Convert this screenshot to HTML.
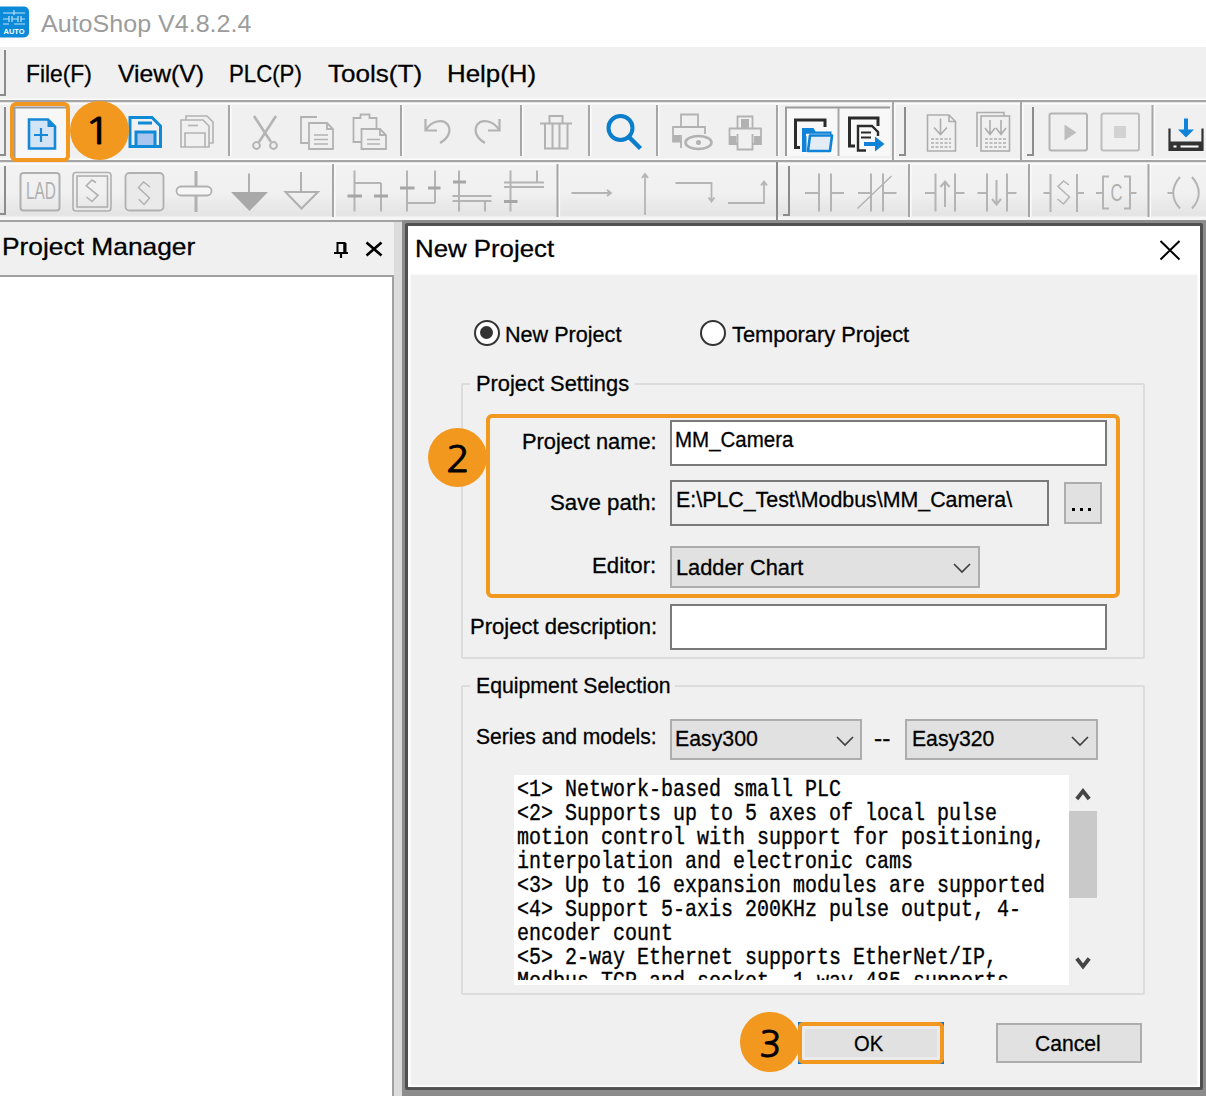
<!DOCTYPE html>
<html><head><meta charset="utf-8"><title>AutoShop V4.8.2.4</title>
<style>
*{box-sizing:border-box;margin:0;padding:0}
html,body{width:1206px;height:1096px;overflow:hidden;background:#f0f0f0}
body{position:relative;font-family:"Liberation Sans",sans-serif;color:#000}
.a{position:absolute}
.t{position:absolute;white-space:nowrap;line-height:1;transform-origin:0 0;-webkit-text-stroke:0.3px currentColor}
#titlebar{left:0;top:0;width:1206px;height:47px;background:#fff}
#menubar{left:0;top:47px;width:1206px;height:53px;background:#f0f0f0}
#tb1{left:0;top:100px;width:1206px;height:60px;background:#f0f0f0}
#tb2{left:0;top:160px;width:1206px;height:62px;background:linear-gradient(#f3f3f3,#f0f0f0 55%,#e4e4e4 92%,#f6f6f6 96%);border-bottom:2.2px solid #a2a2a2}
.hline{position:absolute;left:0;width:1206px;height:7px;background:linear-gradient(to bottom,rgba(253,253,253,0) 0,#fcfcfc 1.2px,#fcfcfc 1.7px,#a4a4a4 2.1px,#a4a4a4 4.2px,#fcfcfc 4.6px,#fcfcfc 6px,rgba(253,253,253,0) 7px)}
#pm-head{left:0;top:222px;width:393px;height:54px;background:#f0f0f0}
#pm-body{left:-2px;top:275px;width:396px;height:830px;background:#fff;border:2px solid #a0a0a0}
#gap{left:394px;top:222px;width:12px;height:880px;background:#dcdcdc}
#dlgshadow{left:402px;top:220px;width:810px;height:880px;background:#8c8c8c}
#dlg{left:405px;top:223px;width:798px;height:867px;background:#fff;border:3px solid #505050;border-radius:2px}
#dlgbody{left:411px;top:275px;width:786px;height:810px;background:#f0f0f0;box-shadow:0 0 2px 1px #f7f7f7}
.grp{position:absolute;border:2px solid #dcdcdc;border-radius:2px}
.inp{position:absolute;border:2px solid #7a7a7a;background:#fff}
.sel{position:absolute;border:2px solid #adadad;background:#e1e1e1}
.btn{position:absolute;border:2px solid #adadad;background:#e1e1e1}
.radio{position:absolute;width:26px;height:26px;border:2px solid #333;border-radius:50%;background:#fff}
.radio.on::after{content:"";position:absolute;left:4.25px;top:4.25px;width:13.5px;height:13.5px;border-radius:50%;background:#333}
.mark{position:absolute;border-radius:50%;background:#f2981f}
.obox{position:absolute;border:4px solid #f2981f;border-radius:6px}
.num{position:absolute;white-space:nowrap;line-height:1;font-size:36px;color:#000;transform-origin:0 0;font-family:"NanumGothic","Liberation Sans",sans-serif;-webkit-text-stroke:0.8px #000}
.mono{position:absolute;font-family:"Liberation Mono",monospace;font-size:24px;line-height:24px;white-space:pre;color:#000;transform:scaleX(0.8333);transform-origin:0 0;-webkit-text-stroke:0.35px #000}
svg{position:absolute;overflow:visible}
</style></head><body>
<div class="a" id="titlebar"></div>
<div class="a" id="menubar"></div>
<div class="a" id="tb1"></div>
<div class="a" id="tb2"></div>
<div class="hline" style="top:97.5px"></div>
<div class="hline" style="top:157.6px"></div>
<div class="a" id="pm-head"></div>
<div class="a" id="pm-body"></div>
<div class="a" id="gap"></div>
<div class="a" id="dlgshadow"></div>
<div class="a" id="dlg"></div>
<div class="a" id="dlgbody"></div>
<!-- toolbar decorations -->
<svg style="left:0;top:0" width="1206" height="224" viewBox="0 0 1206 224" fill="none" stroke-linecap="butt">
<!-- app icon -->
<rect x="-4" y="6.5" width="33" height="31" rx="5" fill="#0b8ad9" stroke="none"/>
<g stroke="#bfe3f8" stroke-width="1.2"><path d="M3 13H25M3 19H9M12 19H18M21 19H25M3 24H9M14 24H25M9 16V22M12 16V22M18 16V22M21 16V22M14 10V15"/></g>
<text x="3.5" y="34" font-family="Liberation Sans, sans-serif" font-weight="bold" font-size="7.5" fill="#fff" stroke="none" textLength="21" lengthAdjust="spacingAndGlyphs">AUTO</text>
<!-- grippers -->
<g stroke="#8c8c8c" stroke-width="2">
<path d="M5 50V95H0"/>
<path d="M5 107V155H0"/>
<path d="M5 166V214H0"/>
<path d="M905 107V155H899"/>
<path d="M1033 107V155H1027"/>
<path d="M789 166V215H783"/>
</g>
<!-- separators -->
<g stroke="#fbfbfb" stroke-width="1.600">
<path d="M230.800 105V156M402.800 105V156M522.800 105V156M590.800 105V156M658.800 105V156M778.800 105V156M1154.300 105V156"/>
<path d="M894.800 103V159M1022.800 103V159"/>
<path d="M334.800 164V217M559.300 164V217M910.800 164V217M1030.800 164V217M1150.300 164V217"/>
</g>
<g stroke="#a6a6a6" stroke-width="2">
<path d="M229 105V156M401 105V156M521 105V156M589 105V156M657 105V156M777 105V156M1152.500 105V156"/>
<path d="M893 101V161M1021 101V161"/>
<path d="M333 164V217M557.500 164V217M909 164V217M1029 164V217M1148.500 164V217"/>
</g>
<path d="M777 162V222" stroke="#8a8a8a" stroke-width="2"/>
<!-- pressed new button -->
<rect x="14" y="105" width="52" height="53" fill="#f7f7f7" stroke="none"/>
<path d="M14.500 158V107.500H66" stroke="#9a9a9a" stroke-width="2"/>
<!-- new doc -->
<path d="M29 119.500H48L55 126.500V148.500H29Z" fill="#d3e5f5" stroke="#1788d6" stroke-width="2.600"/>
<path d="M47.500 119.500L55 127H47.500Z" fill="#1788d6" stroke="none"/>
<path d="M34 135H48M41 128V142" stroke="#1788d6" stroke-width="2.200"/>
<!-- save -->
<path d="M130 117.500H152L160.500 126V146.500H130Z" stroke="#0f8ad6" stroke-width="3"/>
<path d="M138 123H152" stroke="#0f8ad6" stroke-width="3"/>
<rect x="136" y="132" width="19" height="14.500" fill="#a9c6ee" stroke="#0f8ad6" stroke-width="3"/>
<!-- save all -->
<g stroke="#b2b2b2" stroke-width="1.600">
<path d="M181 120H203L209 126V147H181Z"/>
<path d="M186 120V116H207L213 122V143H209"/>
<path d="M188 125.500H198"/>
<path d="M185 147V133H205V147"/>
</g>
<!-- scissors -->
<g stroke="#b4b4b4" stroke-width="2.600">
<path d="M254 116L271 142M276 116L259 142"/>
<circle cx="256.500" cy="145.500" r="3.400" stroke-width="2"/>
<circle cx="273.500" cy="145.500" r="3.400" stroke-width="2"/>
</g>
<!-- copy -->
<g stroke="#b2b2b2" stroke-width="1.800">
<path d="M317 117H301V143H308"/>
<path d="M309 123H327L333 129V149H309Z"/>
<path d="M327 123V129H333"/>
<path d="M314 135H328M314 139.500H328M314 144H328" stroke-width="1.500"/>
</g>
<!-- paste -->
<g stroke="#b2b2b2" stroke-width="1.800">
<path d="M361 142H353.500V118H360.500V114.500H369.500V118H376.500V128"/>
<path d="M361.500 129H380L386 135V149H361.500Z"/>
<path d="M380 129V135H386"/>
<path d="M367 139.500H380M367 144H380" stroke-width="1.500"/>
</g>
<!-- undo -->
<g stroke="#b2b2b2" stroke-width="2.200">
<path d="M425.500 119V130.500H437"/>
<path d="M426 130C431 121 443 118 448 125C452 132 447 139 440 143"/>
<path d="M499.500 119V130.500H488"/>
<path d="M499 130C494 121 482 118 477 125C473 132 478 139 485 143"/>
</g>
<!-- trash -->
<g stroke="#b2b2b2" stroke-width="2">
<path d="M540 123.500H572M549.500 123V116H562.500V123"/>
<path d="M545 124V148.500H567.500V124M552.500 124V148M559.500 124V148"/>
</g>
<!-- search -->
<circle cx="620.500" cy="128" r="12" stroke="#0a7dcb" stroke-width="4"/>
<path d="M629.500 137.500L640.500 148.500" stroke="#0a7dcb" stroke-width="4.500"/>
<!-- print preview -->
<g stroke="#b2b2b2" stroke-width="1.800">
<path d="M681 127V114.500H698V127"/>
<path d="M682 141.500H673V127H705V134"/>
<rect x="673" y="135" width="7" height="6.500" fill="#b2b2b2" stroke="none"/>
<path d="M681 135V148"/>
<ellipse cx="698.500" cy="142.500" rx="13" ry="6.500" stroke-width="2.600"/>
<circle cx="698.500" cy="142.500" r="2.500" fill="#b2b2b2" stroke="none"/>
</g>
<!-- print -->
<g stroke="#b2b2b2" stroke-width="1.800">
<path d="M737.500 128V116.500H752.500V128"/>
<rect x="741" y="119" width="8" height="9" fill="#b2b2b2" stroke="none"/>
<path d="M737.500 144H729.500V128.500H761V144H752.500"/>
<rect x="729.500" y="136" width="7" height="8" fill="#b2b2b2" stroke="none"/>
<rect x="754" y="136" width="7" height="8" fill="#b2b2b2" stroke="none"/>
<path d="M737.500 134V149.500H752.500V134"/>
</g>
<!-- pressed group -->
<rect x="786" y="107" width="104" height="49" fill="#f8f8f8" stroke="none"/>
<path d="M786 156V107.500H890" stroke="#9c9c9c" stroke-width="2"/>
<path d="M838.500 108V156" stroke="#a6a6a6" stroke-width="2"/>
<!-- folders icon -->
<path d="M800 147.500H795.500V120H825V127" stroke="#2b2b2b" stroke-width="3"/>
<path d="M802 128H813.500L815.500 131.500H831.500V136H806.500V152H802Z" fill="#0f83d8" stroke="none"/><path d="M806 133.800H830V136H806Z" fill="#f8f8f8" stroke="none"/>
<path d="M810 135.500H832L830 151H808Z" stroke="#0f83d8" stroke-width="2.600" stroke-linejoin="round" fill="#e4ecf6"/>
<!-- export icon -->
<path d="M855 146H849.500V118H878V126" stroke="#2b2b2b" stroke-width="3"/>
<path d="M866 150.500H858V126H872L878 132V136" stroke="#2b2b2b" stroke-width="2.400"/>
<path d="M861 132.500H871M861 137.500H871" stroke="#2b2b2b" stroke-width="2"/>
<path d="M864 144H877" stroke="#0f83d8" stroke-width="4"/>
<path d="M875 136.500L884.500 144L875 151.500Z" fill="#0f83d8" stroke="none"/>
<!-- download docs -->
<g stroke="#adadad" stroke-width="1.600">
<path d="M927.500 115H949L955.500 121.500V151H927.500Z"/>
<path d="M949 115V121.500H955.500"/>
<path d="M940.500 118.500V134M934 127.500L940.500 134.500L947 127.500"/>
<path d="M931 139H951M931 143H951M931 147H951" stroke-dasharray="3 1.500" stroke-width="1.400"/>
<path d="M977 147V112.500H1004V116"/>
<rect x="981" y="116" width="28.500" height="35"/>
<path d="M990 120V134M985 128L990 134.500L995 128M1001 120V134M996 128L1001 134.500L1006 128"/>
<path d="M985 139H1006M985 143H1006M985 147H1006" stroke-dasharray="3 1.500" stroke-width="1.400"/>
</g>
<!-- play / stop -->
<rect x="1049.500" y="113.500" width="37.500" height="37" rx="2" stroke="#b4b4b4" stroke-width="2"/>
<path d="M1064.500 124.500L1076.500 132.500L1064.500 140.500Z" fill="#bdbdbd" stroke="none"/>
<rect x="1101.500" y="113.500" width="37.500" height="37" rx="2" stroke="#bdbdbd" stroke-width="2"/>
<rect x="1114" y="126" width="12" height="12" fill="#d2d2d2" stroke="none"/>
<!-- download -->
<path d="M1169.500 128.500V150H1202.500V128.500" stroke="#333" stroke-width="2.200"/>
<rect x="1169.500" y="141.500" width="33" height="9" fill="#333" stroke="none"/>
<path d="M1173.500 146.500H1176.500M1180.500 146.500H1198.500" stroke="#fff" stroke-width="2"/>
<path d="M1186 118.500V131" stroke="#0f83d8" stroke-width="4"/>
<path d="M1178 129.500H1194L1186 137.500Z" fill="#0f83d8" stroke="none"/>
<!-- row 2 -->
<g stroke="#b0b0b0" stroke-width="2">
<rect x="20.500" y="173" width="39" height="37.500" rx="3"/>
<rect x="73" y="172.500" width="38" height="38.500" rx="3" stroke-width="1.600"/>
<rect x="77" y="176" width="30.500" height="31" stroke-width="1.600"/>
<path d="M96 182.500L92 180L86.300 185.800L98 195.300L92 201.500L86.500 197" stroke-width="1.600"/>
<rect x="125.500" y="173" width="38" height="37.500" rx="4" stroke-width="1.800" fill="#eaeaea"/>
<path d="M150 187L143.600 182L138.400 187.600L149.600 198L144 204.500L138.800 199.200" stroke-width="1.400"/>
<!-- coil pill -->
<path d="M196 171V212" stroke-width="3"/>
<rect x="176.500" y="186.500" width="35" height="9" rx="4.500" fill="#f6f6f6" stroke-width="1.800"/>
<!-- filled triangle -->
<path d="M249 173.500V193" />
<path d="M231 192H268L249.500 211Z" fill="#a9a9a9" stroke="none"/>
<!-- outline triangle -->
<path d="M301 172V192"/>
<path d="M285.500 192H318L301.500 208.500Z"/>
</g>
<text x="26" y="199.300" font-family="Liberation Sans, sans-serif" font-size="23" fill="#b0b0b0" stroke="none" textLength="30" lengthAdjust="spacingAndGlyphs">LAD</text>
<g stroke="#b4b4b4" stroke-width="2">
<!-- A -->
<path d="M354.500 170.500V211.500M381 183V211.500M354.500 183H381"/>
<path d="M407 170.500V211.500M435 170.500V203M407 203H435"/>
<path d="M459 170.500V211.500M452.500 196H491.500M452.500 201H491.500M485 201V211.500"/>
<path d="M510.500 170.500V211.500M504 182.500H544M504 187H544M537 170.500V182.500"/>
<path d="M347.500 196H362M374 196H388M400 188H414.500M428 188H440.500M453 182H466M504 201.500H517.500" stroke="#a6a6a6" stroke-width="2.800"/>
</g>
<g stroke="#b4b4b4" stroke-width="1.800">
<!-- arrows -->
<path d="M571.500 193H611M607 190L611 193L607 196"/>
<path d="M645 215V174M642 178L645 174L648 178"/>
<path d="M675.500 183H711.500V201M708.500 197.500L711.500 201.500L714.500 197.500"/>
<path d="M728 203H764V182M761 185.500L764 181.500L767 185.500"/>
</g>
<g stroke="#b4b4b4" stroke-width="2">
<!-- contacts -->
<path d="M805 193H819M819 173.500V211.500M831 173.500V211.500M831 193H844"/>
<path d="M858 193H871M871 173.500V211.500M883 173.500V211.500M883 193H896.500"/>
<path d="M857.500 208.500L891.500 176" stroke-width="1.500"/>
<path d="M925 193H935.500M935.500 173.500V211.500M955 173.500V211.500M955 193H964.500"/>
<path d="M945 207V182M940.500 187L945 181.500L949.500 187"/>
<path d="M977.500 193H987M987 173.500V211.500M1007 173.500V211.500M1007 193H1016.500"/>
<path d="M996.500 180V204M992 199L996.500 204.500L1001 199"/>
<!-- S -->
<path d="M1043.500 193H1050.500M1050.500 174V212M1077 174V212M1077 193H1084"/>
<path d="M1069 185L1063.500 181L1058 186.500L1069.500 197L1063.500 204L1057.500 199" stroke-width="1.500"/>
<!-- [C] -->
<path d="M1096 193H1102.500M1109 176.500H1103V208.500H1109M1124 176.500H1130V208.500H1124M1130 193H1136.500"/>
<!-- ( ) -->
<path d="M1167.500 193H1172.500M1180 177C1171 187 1171 199 1180 208.500M1192 177C1201 187 1201 199 1192 208.500"/>
</g>
<text x="1110.500" y="201" font-family="Liberation Sans, sans-serif" font-size="23" fill="#b0b0b0" stroke="none" textLength="12" lengthAdjust="spacingAndGlyphs">C</text>
</svg>
<!-- panel pin & close, dialog close -->
<svg style="left:330px;top:238px" width="60" height="24" viewBox="330 238 60 24" fill="none" stroke="#000">
<path d="M337.500 252.500V243H344.500V252.500" stroke-width="2"/>
<path d="M345 243V252.500" stroke-width="3"/>
<path d="M334 253H348M341 253V258" stroke-width="2.200"/>
<path d="M366.500 242.500L381.500 255.500M381.500 242.500L366.500 255.500" stroke-width="2.600"/>
</svg>
<svg style="left:1156px;top:236px" width="28" height="28" viewBox="1156 236 28 28" fill="none" stroke="#000">
<path d="M1160.500 241L1179.500 259.500M1179.500 241L1160.500 259.500" stroke-width="2"/>
</svg>
<!-- dialog widgets -->
<div class="radio on" style="left:473.5px;top:319.7px"></div>
<div class="radio" style="left:699.6px;top:319.7px"></div>
<div class="grp" style="left:461px;top:383px;width:684px;height:276px"></div>
<div class="a" style="left:470px;top:375px;width:165px;height:20px;background:#f0f0f0"></div>
<div class="grp" style="left:461px;top:685px;width:684px;height:310px"></div>
<div class="a" style="left:470px;top:677px;width:205px;height:20px;background:#f0f0f0"></div>
<div class="inp" style="left:669.7px;top:420px;width:437.3px;height:46px"></div>
<div class="inp" style="left:669.7px;top:480px;width:379.3px;height:46px;background:#f0f0f0"></div>
<div class="btn" style="left:1064px;top:482px;width:38px;height:42px"></div>
<div class="a" style="left:1072px;top:508px;width:3px;height:3px;background:#000"></div>
<div class="a" style="left:1080px;top:508px;width:3px;height:3px;background:#000"></div>
<div class="a" style="left:1088px;top:508px;width:3px;height:3px;background:#000"></div>
<div class="sel" style="left:669.7px;top:546px;width:310.5px;height:42px"></div>
<div class="inp" style="left:669.7px;top:604px;width:437.3px;height:46px"></div>
<div class="sel" style="left:669.7px;top:719px;width:192.3px;height:41px"></div>
<div class="sel" style="left:905px;top:719px;width:193px;height:41px"></div>
<svg style="left:953px;top:563px" width="18" height="10"><path d="M1 1 L9 9 L17 1" fill="none" stroke="#404040" stroke-width="1.700"/></svg>
<svg style="left:836px;top:736px" width="18" height="10"><path d="M1 1 L9 9 L17 1" fill="none" stroke="#404040" stroke-width="1.700"/></svg>
<svg style="left:1071px;top:736px" width="18" height="10"><path d="M1 1 L9 9 L17 1" fill="none" stroke="#404040" stroke-width="1.700"/></svg>
<!-- text area -->
<div class="a" style="left:514px;top:775px;width:554.5px;height:210px;background:#fff"></div>
<div class="a" style="left:514px;top:775px;width:554.5px;height:205px;background:#fff;overflow:hidden"><div class="mono" style="left:2.8px;top:2.9px">&lt;1&gt; Network-based small PLC
&lt;2&gt; Supports up to 5 axes of local pulse
motion control with support for positioning,
interpolation and electronic cams
&lt;3&gt; Up to 16 expansion modules are supported
&lt;4&gt; Support 5-axis 200KHz pulse output, 4-
encoder count
&lt;5&gt; 2-way Ethernet supports EtherNet/IP,
Modbus-TCP and socket, 1-way 485 supports</div></div>
<div class="a" style="left:1068.5px;top:810.5px;width:28.5px;height:87px;background:#c9c9c9"></div>
<svg style="left:1075px;top:786px" width="17" height="16"><path d="M1.8 13 L8 5 L14.200 13" fill="none" stroke="#454545" stroke-width="3.800"/></svg>
<svg style="left:1075px;top:955px" width="17" height="16"><path d="M1.8 3.500 L8 11.500 L14.200 3.500" fill="none" stroke="#454545" stroke-width="3.800"/></svg>
<!-- buttons -->
<div class="btn" style="left:798px;top:1022px;width:146px;height:42px;border-color:#0078d7;box-shadow:inset 0 0 0 5px #ebebeb"></div>
<div class="obox" style="left:798px;top:1022px;width:146px;height:42px;border-radius:5px"></div>
<div class="btn" style="left:996px;top:1023px;width:146px;height:40px"></div>
<!-- markers -->
<div class="obox" style="left:486px;top:414px;width:634px;height:184px"></div>
<div class="mark" style="left:428px;top:428px;width:59px;height:59px"></div>
<div class="mark" style="left:740px;top:1012px;width:59.5px;height:59.5px"></div>
<div class="mark" style="left:69.5px;top:100.5px;width:59px;height:59px"></div>
<div class="obox" style="left:10px;top:102px;width:60px;height:60px"></div>
<div class="num" style="left:84px;top:112.8px;transform:scaleX(1.25)">1</div>
<div class="num" style="left:446.3px;top:441px;transform:scaleX(1.097)">2</div>
<div class="num" style="left:759px;top:1025.6px;transform:scaleX(1.026)">3</div>
<div class="t" style="left:41.0px;top:11.7px;font-size:24px;color:#9c9c9c;transform:scaleX(1.0440);-webkit-text-stroke:0;">AutoShop V4.8.2.4</div>
<div class="t" style="left:26.0px;top:61.7px;font-size:24px;color:#000;transform:scaleX(0.9506);">File(F)</div>
<div class="t" style="left:118.0px;top:61.7px;font-size:24px;color:#000;transform:scaleX(1.0292);">View(V)</div>
<div class="t" style="left:229.1px;top:61.7px;font-size:24px;color:#000;transform:scaleX(0.9258);">PLC(P)</div>
<div class="t" style="left:328.0px;top:61.7px;font-size:24px;color:#000;transform:scaleX(1.0854);">Tools(T)</div>
<div class="t" style="left:446.9px;top:61.7px;font-size:24px;color:#000;transform:scaleX(1.0783);">Help(H)</div>
<div class="t" style="left:1.7px;top:235.2px;font-size:24px;color:#000;transform:scaleX(1.0977);">Project Manager</div>
<div class="t" style="left:414.5px;top:237.2px;font-size:24px;color:#000;transform:scaleX(1.0753);">New Project</div>
<div class="t" style="left:504.5px;top:323.9px;font-size:22px;color:#000;transform:scaleX(0.9814);">New Project</div>
<div class="t" style="left:732.3px;top:323.9px;font-size:22px;color:#000;transform:scaleX(0.9922);">Temporary Project</div>
<div class="t" style="left:475.5px;top:373.4px;font-size:22px;color:#000;transform:scaleX(0.9936);">Project Settings</div>
<div class="t" style="left:521.5px;top:430.7px;font-size:22px;color:#000;transform:scaleX(0.9917);">Project name:</div>
<div class="t" style="left:675.4px;top:429.4px;font-size:22px;color:#000;transform:scaleX(0.9315);">MM_Camera</div>
<div class="t" style="left:549.6px;top:492.1px;font-size:22px;color:#000;transform:scaleX(1.0129);">Save path:</div>
<div class="t" style="left:676.2px;top:488.9px;font-size:22px;color:#000;transform:scaleX(0.9714);">E:\PLC_Test\Modbus\MM_Camera\</div>
<div class="t" style="left:591.9px;top:554.8px;font-size:22px;color:#000;transform:scaleX(1.0102);">Editor:</div>
<div class="t" style="left:676.2px;top:556.9px;font-size:22px;color:#000;transform:scaleX(0.9906);">Ladder Chart</div>
<div class="t" style="left:469.5px;top:616.2px;font-size:22px;color:#000;transform:scaleX(1.0007);">Project description:</div>
<div class="t" style="left:475.5px;top:674.9px;font-size:22px;color:#000;transform:scaleX(0.9641);">Equipment Selection</div>
<div class="t" style="left:476.0px;top:726.4px;font-size:22px;color:#000;transform:scaleX(0.9591);">Series and models:</div>
<div class="t" style="left:675.0px;top:727.9px;font-size:22px;color:#000;transform:scaleX(0.9682);">Easy300</div>
<div class="t" style="left:873.6px;top:727.9px;font-size:22px;color:#000;transform:scaleX(1.1099);">--</div>
<div class="t" style="left:911.8px;top:727.9px;font-size:22px;color:#000;transform:scaleX(0.9623);">Easy320</div>
<div class="t" style="left:854.1px;top:1032.7px;font-size:22px;color:#000;transform:scaleX(0.9160);">OK</div>
<div class="t" style="left:1034.6px;top:1032.7px;font-size:22px;color:#000;transform:scaleX(0.9580);">Cancel</div></body></html>
